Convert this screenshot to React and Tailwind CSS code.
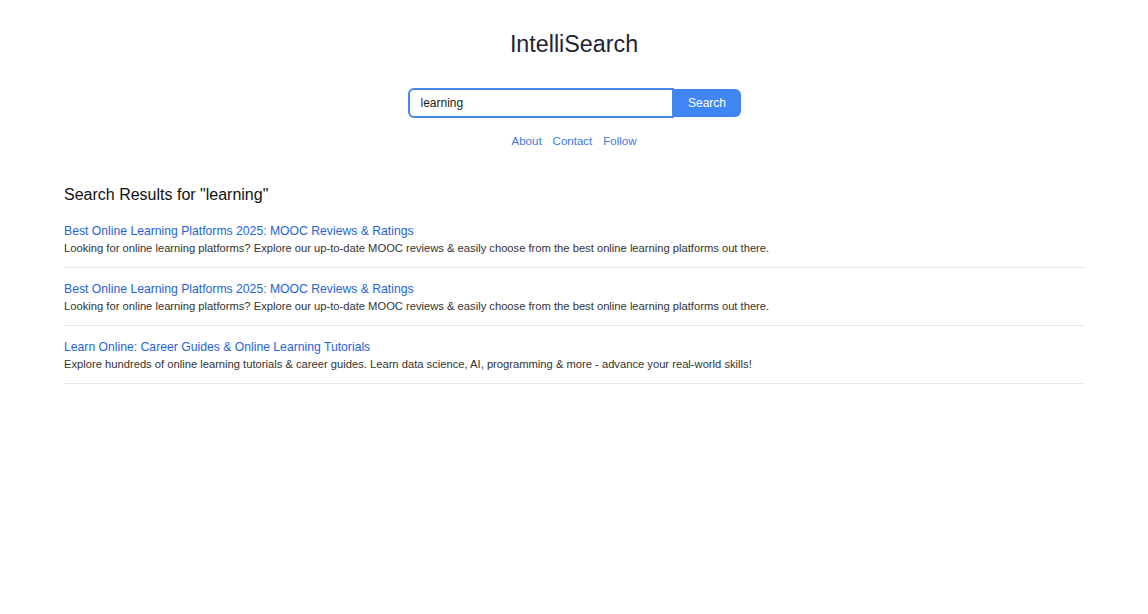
import React, { useState } from 'react';

const results = [
  {
    title: 'Best Online Learning Platforms 2025: MOOC Reviews & Ratings',
    desc: 'Looking for online learning platforms? Explore our up-to-date MOOC reviews & easily choose from the best online learning platforms out there.',
  },
  {
    title: 'Best Online Learning Platforms 2025: MOOC Reviews & Ratings',
    desc: 'Looking for online learning platforms? Explore our up-to-date MOOC reviews & easily choose from the best online learning platforms out there.',
  },
  {
    title: 'Learn Online: Career Guides & Online Learning Tutorials',
    desc: 'Explore hundreds of online learning tutorials & career guides. Learn data science, AI, programming & more - advance your real-world skills!',
  },
];

const App = () => {
  const [query, setQuery] = useState('learning');

  return (
    <div className="min-h-screen bg-white px-16 pt-[30px] font-['Liberation_Sans','Inter',sans-serif] text-[#1f2937]">
      {/* header */}
      <h1 className="text-center text-[23.3px] leading-[28px] text-[#1e2435]">IntelliSearch</h1>

      {/* search box */}
      <div className="mt-[30px] flex justify-center">
        <input
          value={query}
          onChange={(e) => setQuery(e.target.value)}
          className="h-[30px] w-[266px] rounded-l-[6px] border-2 border-[#4a86e8] px-[11px] text-[12px] text-[#222] outline-none"
        />
        <button className="h-[28px] mt-[1px] w-[67px] rounded-r-[6px] bg-[#3f86f4] text-[12px] text-white">
          Search
        </button>
      </div>

      {/* links */}
      <div className="mt-[15px] flex justify-center gap-[11px] text-[11.5px] text-[#3b78d8]">
        <a href="#">About</a>
        <a href="#">Contact</a>
        <a href="#">Follow</a>
      </div>

      {/* results */}
      <h2 className="mt-[34px] text-[16px] leading-[22px] text-[#111]">Search Results for "{query}"</h2>
      <ul className="mt-[14px]">
        {results.map((r, i) => (
          <li key={i} className="border-b border-[#e5e7eb] pb-[11px] pt-[2px] mb-[10px]">
            <a href="#" className="block text-[12.2px] leading-[18px] text-[#1f63d6]">
              {r.title}
            </a>
            <p className="mt-[0px] text-[11.2px] leading-[16px] text-[#333]">{r.desc}</p>
          </li>
        ))}
      </ul>
    </div>
  );
};

export default App;
